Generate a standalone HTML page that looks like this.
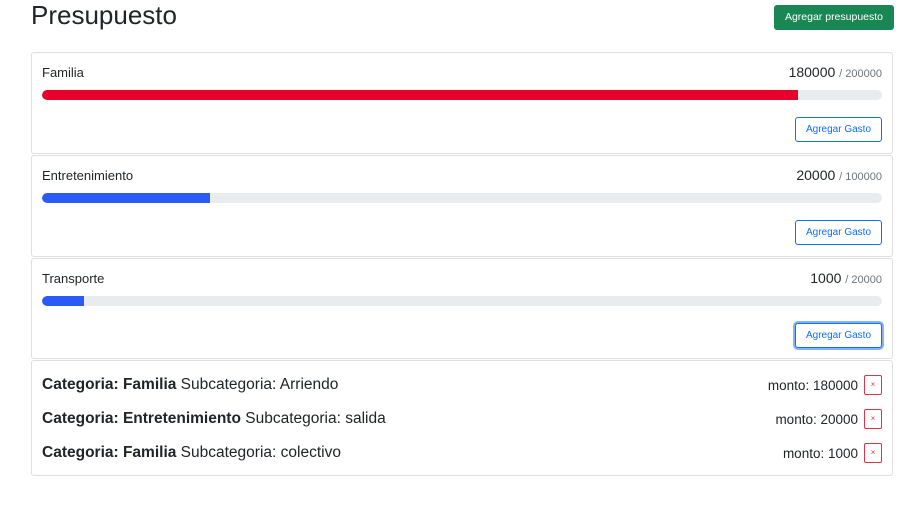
<!DOCTYPE html><html><head><style>
body{margin:0;width:905px;height:509px;background:#fff;font-family:"Liberation Sans",sans-serif;color:#212529;position:relative;overflow:hidden}
.a{position:absolute}
.card{position:absolute;left:31px;width:860px;border:1px solid #dfdfdf;border-radius:3px}
.lbl{position:absolute;left:10px;top:12px;font-size:13px}
.amt{position:absolute;right:10px;top:11px;font-size:14px}
.amt small{font-size:11px;color:#6c757d}
.bar{position:absolute;left:10px;width:840px;top:37px;height:10px;background:#e9ecef;border-radius:5px;overflow:hidden}
.bar div{height:100%;border-radius:5px 0 0 5px}
.btn{position:absolute;right:10px;top:64px;width:85px;height:23px;border:1px solid #0d6efd;border-radius:3px;color:#0d6efd;font-size:10px;text-align:center;line-height:24px;background:#fff}
.row{position:absolute;left:10px;right:10px;font-size:15.5px;height:20px}
.row .m{position:absolute;right:24px;top:2px;font-size:13.5px}
.row .x{position:absolute;right:0;top:-1px;width:16px;height:18px;border:1px solid #dc3545;border-radius:2px;color:#dc3545;font-size:8px;text-align:center;line-height:18px}
</style></head><body>
<div class="a" style="left:31px;top:-1px;font-size:26px;line-height:32px">Presupuesto</div>
<div class="a" style="left:774px;top:5px;width:120px;height:25px;background:#198754;border-radius:3px;color:#fff;font-size:10.5px;text-align:center;line-height:25px">Agregar presupuesto</div>

<div class="card" style="top:52px;height:100px">
<div class="lbl">Familia</div><div class="amt">180000 <small>/ 200000</small></div>
<div class="bar"><div style="width:756px;background:#e8002d"></div></div>
<div class="btn">Agregar Gasto</div></div>

<div class="card" style="top:155px;height:100px">
<div class="lbl">Entretenimiento</div><div class="amt">20000 <small>/ 100000</small></div>
<div class="bar"><div style="width:168px;background:#2a5cf5"></div></div>
<div class="btn">Agregar Gasto</div></div>

<div class="card" style="top:258px;height:99px">
<div class="lbl">Transporte</div><div class="amt">1000 <small>/ 20000</small></div>
<div class="bar"><div style="width:42px;background:#2a5cf5"></div></div>
<div class="btn" style="box-shadow:0 0 0 2px #86b1fb">Agregar Gasto</div></div>

<div class="card" style="top:360px;height:114px">
<div class="row" style="top:15px"><b>Categoria: Familia</b> Subcategoria: Arriendo<span class="m">monto: 180000</span><span class="x">×</span></div>
<div class="row" style="top:49px"><b>Categoria: Entretenimiento</b> Subcategoria: salida<span class="m">monto: 20000</span><span class="x">×</span></div>
<div class="row" style="top:83px"><b>Categoria: Familia</b> Subcategoria: colectivo<span class="m">monto: 1000</span><span class="x">×</span></div>
</div>
</body></html>
